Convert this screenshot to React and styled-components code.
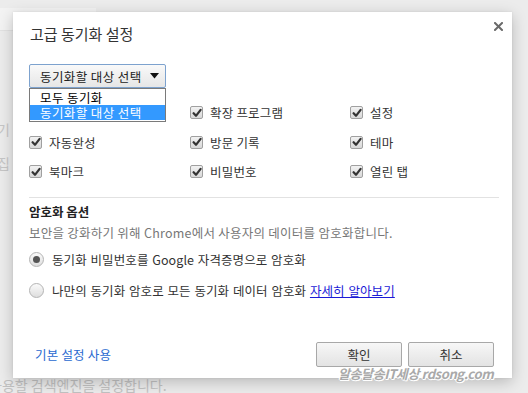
import styled, { createGlobalStyle } from 'styled-components';

const GlobalStyle = createGlobalStyle`
    html, body { margin: 0; padding: 0; }
    body {
        font-family: "Noto Sans CJK KR", "Noto Sans", sans-serif;
        background: #ececec;
    }
`;

const FONT = `"Noto Sans CJK KR", "Noto Sans", sans-serif`;

const syncItems = [
    ['앱', '확장 프로그램', '설정'],
    ['자동완성', '방문 기록', '테마'],
    ['북마크', '비밀번호', '열린 탭'],
];

const CheckIcon = () => (
    <svg width="10" height="10" viewBox="0 0 10 10">
        <path d="M1.6 5.2 L4 7.8 L8.6 1.8" fill="none" stroke="#333" strokeWidth="2.2" strokeLinecap="round" strokeLinejoin="round" />
    </svg>
);

const CloseIcon = () => (
    <svg width="9" height="9" viewBox="0 0 9 9">
        <path d="M1 1 L8 8 M8 1 L1 8" stroke="#6a6a6a" strokeWidth="2" strokeLinecap="square" />
    </svg>
);

const ArrowIcon = () => (
    <svg width="9" height="6" viewBox="0 0 9 6">
        <path d="M0 0 H9 L4.5 5.5 Z" fill="#111" />
    </svg>
);

const App = () => {
    return (
        <>
            <GlobalStyle />
            <Page>
                <Backdrop>
                    <TopStrip />
                    <FaintText $top={91}>기</FaintText>
                    <FaintText $top={20}>집</FaintText>
                    <FaintBottom>사용할 검색엔진을 설정합니다.</FaintBottom>
                </Backdrop>

                <Dialog>
                    <Header>
                        <Title>고급 동기화 설정</Title>
                        <CloseButton aria-label="닫기"><CloseIcon /></CloseButton>
                    </Header>

                    <Body>
                        <SelectWrap>
                            <Select>
                                <span>동기화할 대상 선택</span>
                                <ArrowIcon />
                            </Select>
                            <OptionList>
                                <Option>모두 동기화</Option>
                                <Option $active>동기화할 대상 선택</Option>
                            </OptionList>
                        </SelectWrap>

                        <CheckGrid>
                            {syncItems.flat().map((label) => (
                                <CheckItem key={label}>
                                    <CheckBox><CheckIcon /></CheckBox>
                                    <span>{label}</span>
                                </CheckItem>
                            ))}
                        </CheckGrid>

                        <Divider />

                        <SectionTitle>암호화 옵션</SectionTitle>
                        <Description>보안을 강화하기 위해 Chrome에서 사용자의 데이터를 암호화합니다.</Description>

                        <RadioRow>
                            <Radio $checked />
                            <span>동기화 비밀번호를 Google 자격증명으로 암호화</span>
                        </RadioRow>
                        <RadioRow>
                            <Radio />
                            <span>나만의 동기화 암호로 모든 동기화 데이터 암호화 <InlineLink href="#">자세히 알아보기</InlineLink></span>
                        </RadioRow>
                    </Body>

                    <Footer>
                        <ResetLink href="#">기본 설정 사용</ResetLink>
                        <Buttons>
                            <Button>확인</Button>
                            <Button>취소</Button>
                        </Buttons>
                    </Footer>
                </Dialog>

                <Watermark>알송달송IT세상 rdsong.com</Watermark>
            </Page>
        </>
    );
};

export default App;

const Page = styled.div`
    position: relative;
    width: 528px;
    height: 393px;
    overflow: hidden;
    background: #ececec;
`;

const Backdrop = styled.div`
    display: flex;
    flex-direction: column;
    height: 100%;
    font-family: ${FONT};
`;

const TopStrip = styled.div`
    margin-top: 8px;
    width: 96px;
    height: 22px;
    background: #f3f3f3;
    border-bottom: 1px solid #e2e2e2;
`;

const FaintText = styled.div`
    margin-top: ${(p) => p.$top}px;
    font-size: 14px;
    line-height: 14px;
    color: #c6c6c6;
    text-indent: -3px;
`;

const FaintBottom = styled.div`
    margin-top: auto;
    margin-bottom: 1px;
    font-size: 14px;
    line-height: 14px;
    color: #c2c2c2;
    text-indent: -11px;
    white-space: nowrap;
`;

const Dialog = styled.div`
    position: absolute;
    left: 13px;
    top: 12px;
    width: 499px;
    height: 366px;
    display: flex;
    flex-direction: column;
    background: #fff;
    box-shadow: 0 4px 14px rgba(0, 0, 0, 0.22), 0 0 2px rgba(0, 0, 0, 0.08);
    font-family: ${FONT};
    color: #333;
`;

const Header = styled.div`
    display: flex;
    justify-content: space-between;
    align-items: flex-start;
    padding: 13px 9px 0 17px;
`;

const Title = styled.h1`
    margin: 0;
    font-size: 15px;
    font-weight: 400;
    line-height: 18px;
    color: #333;
`;

const CloseButton = styled.button`
    display: flex;
    align-items: center;
    justify-content: center;
    width: 10px;
    height: 10px;
    margin-top: -4px;
    padding: 0;
    border: 0;
    background: none;
`;

const Body = styled.div`
    display: flex;
    flex-direction: column;
    padding: 0 13px 0 16px;
    font-size: 12.5px;
`;

const SelectWrap = styled.div`
    position: relative;
    margin-top: 21px;
    width: 137px;
    z-index: 2;
`;

const Select = styled.div`
    display: flex;
    align-items: center;
    justify-content: space-between;
    box-sizing: border-box;
    height: 24px;
    padding: 0 6px 0 10px;
    border: 1px solid #7da2ce;
    border-radius: 2px;
    background: linear-gradient(#f9f9f9, #e6e6e6);
    font-size: 12.5px;
    letter-spacing: 0.4px;
    color: #222;
    white-space: nowrap;
`;

const OptionList = styled.div`
    position: absolute;
    left: 0;
    top: 24px;
    box-sizing: border-box;
    width: 137px;
    padding: 1px 0;
    border: 1px solid #7a7a7a;
    background: #fff;
`;

const Option = styled.div`
    height: 15px;
    padding-left: 10px;
    font-size: 12.5px;
    letter-spacing: 0.4px;
    line-height: 15px;
    white-space: nowrap;
    color: ${(p) => (p.$active ? '#fff' : '#000')};
    background: ${(p) => (p.$active ? '#3399ff' : 'transparent')};
`;

const CheckGrid = styled.div`
    display: grid;
    grid-template-columns: 161px 160px 1fr;
    grid-auto-rows: 29.5px;
    margin-top: 10px;
`;

const CheckItem = styled.label`
    display: flex;
    align-items: center;
    gap: 7px;
    font-size: 12.5px;
    letter-spacing: 0.2px;
    color: #333;
    white-space: nowrap;
`;

const CheckBox = styled.span`
    display: flex;
    align-items: center;
    justify-content: center;
    box-sizing: border-box;
    width: 13px;
    height: 13px;
    border: 1px solid #a0a0a0;
    border-radius: 2px;
    background: linear-gradient(#f2f2f2, #d8d8d8);
`;

const Divider = styled.hr`
    margin: 10px 0 0;
    border: 0;
    border-top: 1px solid #e2e2e2;
`;

const SectionTitle = styled.div`
    margin-top: 5px;
    font-size: 12.5px;
    font-weight: 700;
    line-height: 18px;
    color: #222;
`;

const Description = styled.div`
    margin-top: 3px;
    font-size: 12.5px;
    letter-spacing: 0.25px;
    line-height: 18px;
    color: #777;
    white-space: nowrap;
`;

const RadioRow = styled.label`
    display: flex;
    align-items: center;
    gap: 8px;
    height: 31px;
    font-size: 12.5px;
    letter-spacing: 0.1px;
    word-spacing: 0.8px;
    color: #333;
    white-space: nowrap;
    &:first-of-type {
        margin-top: 2px;
    }
`;

const Radio = styled.span`
    position: relative;
    box-sizing: border-box;
    width: 15px;
    height: 15px;
    border: 1px solid #b4b4b4;
    border-radius: 50%;
    background: linear-gradient(#fafafa, #dedede);
    &::after {
        content: '';
        display: ${(p) => (p.$checked ? 'block' : 'none')};
        position: absolute;
        left: 3px;
        top: 3px;
        width: 7px;
        height: 7px;
        border-radius: 50%;
        background: #555;
    }
`;

const InlineLink = styled.a`
    color: #1b1bd6;
    text-decoration: underline;
`;

const Footer = styled.div`
    display: flex;
    align-items: center;
    justify-content: space-between;
    margin-top: auto;
    padding: 0 18px 11px 22px;
`;

const ResetLink = styled.a`
    font-size: 12.5px;
    letter-spacing: 0.2px;
    color: #2a6ad0;
    text-decoration: none;
`;

const Buttons = styled.div`
    display: flex;
    gap: 6px;
`;

const Button = styled.button`
    box-sizing: border-box;
    width: 86px;
    height: 25px;
    border: 1px solid #a8a8a8;
    border-radius: 2px;
    background: linear-gradient(#f7f7f7, #e3e3e3);
    font-family: ${FONT};
    font-size: 12.5px;
    color: #333;
`;

const Watermark = styled.div`
    position: absolute;
    left: 338px;
    top: 364px;
    font-family: ${FONT};
    font-size: 13px;
    font-weight: 700;
    font-style: italic;
    letter-spacing: -0.4px;
    color: #a9a9a9;
    white-space: nowrap;
    text-shadow: 1px 0 0 #fff, -1px 0 0 #fff, 0 1px 0 #fff, 0 -1px 0 #fff, 1px 1px 0 #fff, -1px -1px 0 #fff;
`;
